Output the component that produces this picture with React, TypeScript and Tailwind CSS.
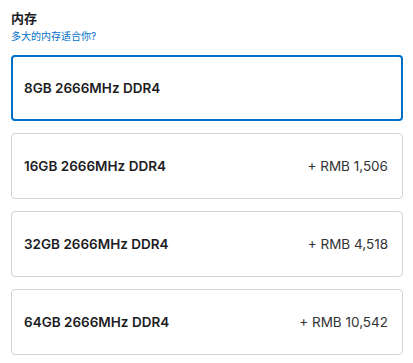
const options = [
  { name: "8GB 2666MHz DDR4", price: "" },
  { name: "16GB 2666MHz DDR4", price: "+ RMB 1,506" },
  { name: "32GB 2666MHz DDR4", price: "+ RMB 4,518" },
  { name: "64GB 2666MHz DDR4", price: "+ RMB 10,542" },
];

const App = () => {
  const selected = 0;
  return (
    <main
      className="min-h-screen bg-white px-[11px] pt-[8px] text-[#1d1d1f]"
      style={{ fontFamily: 'Inter, "Noto Sans CJK SC", sans-serif' }}
    >
      <h2 className="text-[13px] font-semibold leading-5">内存</h2>
      <a className="block text-[10px] leading-4 text-[#0070c9]" href="#">
        多大的内存适合你?
      </a>

      <div className="mt-[11px] flex w-[392px] flex-col gap-[12px]">
        {options.map((o, i) => (
          <button
            key={o.name}
            className={
              i === selected
                ? "flex h-[66px] items-center justify-between rounded-[4px] border-2 border-[#0070c9] pl-[11px] pr-[13px] text-left"
                : "flex h-[66px] items-center justify-between rounded-[4px] border border-[#d2d2d7] pl-[12px] pr-[14px] text-left"
            }
          >
            <span className="text-[13.5px] font-semibold">{o.name}</span>
            <span className="text-[13.5px] text-[#333336]">{o.price}</span>
          </button>
        ))}
      </div>
    </main>
  );
};

export default App;
